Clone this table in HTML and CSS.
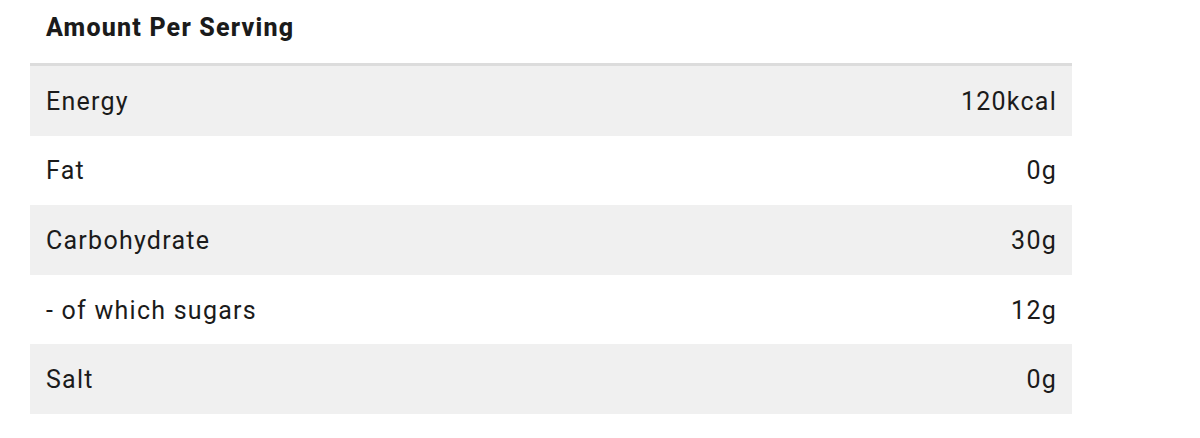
FILE: index.html
```html
<!DOCTYPE html>
<html>
<head>
<meta charset="utf-8">
<link rel="stylesheet" href="styles.css">
</head>
<body>
<div class="panel">
  <h2 class="title">Amount Per Serving</h2>
  <table class="nutrition">
    <tbody>
      <tr class="shade"><td>Energy</td><td class="val">120kcal</td></tr>
      <tr><td>Fat</td><td class="val">0g</td></tr>
      <tr class="shade"><td>Carbohydrate</td><td class="val">30g</td></tr>
      <tr><td>- of which sugars</td><td class="val">12g</td></tr>
      <tr class="shade"><td>Salt</td><td class="val">0g</td></tr>
    </tbody>
  </table>
</div>
</body>
</html>
```
FILE: styles.css
```css
html, body {
  margin: 0;
  padding: 0;
  background: #ffffff;
}
body {
  font-family: Roboto, "Liberation Sans", sans-serif;
  color: #1b1b1b;
}
.panel {
  padding-left: 30px;
  width: 1042px;
}
.title {
  margin: 0;
  height: 63px;
  box-sizing: border-box;
  padding: 12px 0 0 16px;
  font-size: 25px;
  line-height: 32px;
  font-weight: 800;
  letter-spacing: 1.2px;
}
.nutrition {
  width: 100%;
  border-collapse: collapse;
  border-top: 3px solid #dcdcdc;
}
.nutrition td {
  height: 67.6px;
  padding: 2px 16px 0;
  font-size: 25px;
  line-height: 30px;
  letter-spacing: 1.25px;
  vertical-align: middle;
}
.nutrition .val {
  text-align: right;
  padding-right: 15px;
}
.shade {
  background: #f0f0f0;
}
```
